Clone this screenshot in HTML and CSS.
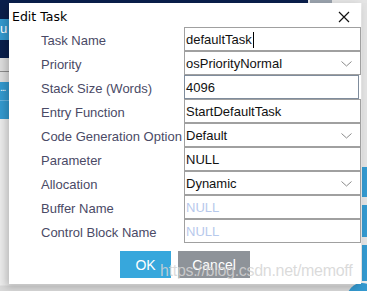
FILE: index.html
```html
<!DOCTYPE html>
<html>
<head>
	<meta charset="utf-8">
	<title>Edit Task</title>
	<link rel="stylesheet" href="styles.css">
</head>
<body>
	<div class="app">
		<div class="topbar">
			<div class="topbar-fill"></div>
			<div class="topbar-tab"></div>
			<div class="topbar-end"></div>
		</div>
		<div class="side">
			<div class="navy h16"></div>
			<div class="tile h21">u</div>
			<div class="navy h18"></div>
			<div class="gray h13"></div>
			<div class="line"></div>
			<div class="gray h10"></div>
			<div class="tile h18 dots">...</div>
			<div class="tile h18 sep"></div>
		</div>
		<div class="right-side">
			<div class="rs-gap h164"></div>
			<div class="rs-blue h30"></div>
			<div class="rs-gap h8"></div>
			<div class="rs-blue h32"></div>
			<div class="rs-gap h8"></div>
			<div class="rs-blue h36"></div>
		</div>
		<div class="corner"></div>
	</div>

	<div class="dialog">
		<div class="titlebar">
			<span class="title">Edit Task</span>
			<svg class="close" width="12" height="12" viewBox="0 0 12 12">
				<path d="M1 1 L11 11 M11 1 L1 11" stroke="#111" stroke-width="1.2" fill="none"/>
			</svg>
		</div>
		<div class="form">
			<label>Task Name</label>
			<div class="box"><span>defaultTask</span><span class="caret"></span></div>
			<label>Priority</label>
			<div class="box select">osPriorityNormal<svg class="chev" width="11" height="6" viewBox="0 0 11 6"><path d="M0.5 0.5 L5.5 5 L10.5 0.5" stroke="#8a8a8a" fill="none"/></svg></div>
			<label>Stack Size (Words)</label>
			<div class="box focus">4096</div>
			<label>Entry Function</label>
			<div class="box">StartDefaultTask</div>
			<label>Code Generation Option</label>
			<div class="box select">Default<svg class="chev" width="11" height="6" viewBox="0 0 11 6"><path d="M0.5 0.5 L5.5 5 L10.5 0.5" stroke="#8a8a8a" fill="none"/></svg></div>
			<label>Parameter</label>
			<div class="box">NULL</div>
			<label>Allocation</label>
			<div class="box select">Dynamic<svg class="chev" width="11" height="6" viewBox="0 0 11 6"><path d="M0.5 0.5 L5.5 5 L10.5 0.5" stroke="#8a8a8a" fill="none"/></svg></div>
			<label>Buffer Name</label>
			<div class="box muted">NULL</div>
			<label>Control Block Name</label>
			<div class="box muted">NULL</div>
		</div>
		<div class="buttons">
			<button class="btn ok">OK</button>
			<button class="btn cancel">Cancel</button>
		</div>
		<div class="watermark">https://blog.csdn.net/memoff</div>
	</div>
</body>
</html>
```

FILE: styles.css
```css
body{
	margin: 0;
	width: 367px;
	height: 291px;
	overflow: hidden;
	font-family: "Liberation Sans", Arial, sans-serif;
	background-color: #ececec;
	position: relative;
}
.app{
	width: 367px;
	height: 291px;
	position: relative;
	overflow: hidden;
	background: linear-gradient(to bottom, #ececec 0, #ececec 285px, #d9d9d9 286px);
}
.topbar{
	display: flex;
	height: 3px;
}
.topbar-fill{
	width: 308px;
	background-color: #0a1f4c;
}
.topbar-tab{
	width: 22px;
	background-color: #9aa3ad;
	margin-left: 2px;
}
.topbar-end{
	flex: 1;
	background-color: #e4e4e4;
}
.side{
	width: 9px;
	display: flex;
	flex-direction: column;
}
.navy{
	background-color: #0a1f4c;
}
.gray{
	background-color: #dedede;
}
.line{
	height: 1px;
	background-color: #8c8c8c;
}
.tile{
	background-color: #3499cf;
	color: #fff;
	font-size: 13px;
	line-height: 20px;
	overflow: hidden;
	white-space: nowrap;
}
.dots{
	font-size: 10px;
	letter-spacing: -1px;
	line-height: 12px;
}
.sep{
	border-top: 1px solid #6ab4de;
}
.h8{ height: 8px; }
.h10{ height: 10px; }
.h13{ height: 13px; }
.h16{ height: 16px; }
.h18{ height: 18px; }
.h21{ height: 21px; }
.h30{ height: 30px; }
.h32{ height: 32px; }
.h36{ height: 36px; }
.h164{ height: 164px; }
.right-side{
	position: absolute;
	right: 0;
	top: 3px;
	width: 5px;
	display: flex;
	flex-direction: column;
}
.rs-gap{
	background-color: #e2e2e2;
}
.rs-blue{
	background-color: #3499cf;
}
.corner{
	position: absolute;
	right: -10px;
	bottom: -22px;
	width: 30px;
	height: 30px;
	border-radius: 50%;
	background-color: #3499cf;
}
.dialog{
	position: absolute;
	left: 9px;
	top: 3px;
	width: 352px;
	height: 281px;
	background-color: #fff;
	box-shadow: -3px 3px 8px rgba(0,0,0,0.22);
}
.titlebar{
	height: 24px;
	display: flex;
	align-items: center;
	justify-content: space-between;
	padding: 0 11px 0 3px;
}
.title{
	font-family: "DejaVu Sans", sans-serif;
	font-size: 12.5px;
	color: #000;
	padding-top: 3px;
}
.close{
	margin-top: 3px;
}
.form{
	display: grid;
	grid-template-columns: 143px 177px;
	grid-auto-rows: 24px;
	padding-left: 32px;
}
label{
	font-size: 13px;
	color: #4a4a66;
	line-height: 24px;
	padding-top: 2px;
}
.box{
	border: 1px solid #a0a0a0;
	font-size: 13px;
	color: #111;
	line-height: 22px;
	padding-left: 1px;
	padding-top: 1px;
	display: flex;
	align-items: center;
	position: relative;
}
.focus{
	border-color: #7f8c9c;
	margin-right: 2px;
}
.muted{
	color: #b7c9ec;
}
.caret{
	width: 1px;
	height: 16px;
	background-color: #000;
	margin-left: 1px;
}
.chev{
	position: absolute;
	right: 8px;
	top: 9px;
}
.buttons{
	display: flex;
	gap: 7px;
	padding-left: 111px;
	margin-top: 8px;
}
.btn{
	height: 27px;
	border: none;
	color: #fff;
	font-family: "Liberation Sans", Arial, sans-serif;
	font-size: 14px;
	padding: 0;
}
.ok{
	width: 51px;
	background-color: #37a7dc;
}
.cancel{
	width: 72px;
	background-color: #8e9399;
}
.watermark{
	position: absolute;
	left: 151px;
	top: 259px;
	font-size: 16px;
	color: rgba(212,212,212,0.85);
	white-space: nowrap;
	letter-spacing: -0.3px;
}
```
